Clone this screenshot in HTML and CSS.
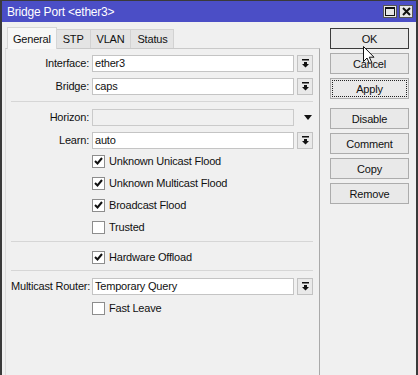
FILE: index.html
```html
<!DOCTYPE html>
<html lang="en">
<head>
  <meta charset="UTF-8" />
  <title>Bridge Port &lt;ether3&gt;</title>
  <link rel="stylesheet" href="styles.css">
</head>
<body>

  <div class="window">
    <!-- Title bar -->
    <div class="titlebar">
      <span class="title">Bridge Port &lt;ether3&gt;</span>
      <div class="title-btns">
        <span class="tbtn">
          <svg width="10" height="9" viewBox="0 0 10 9"><rect x="0.5" y="0.5" width="9" height="8" fill="none" stroke="#111"/><rect x="0" y="0" width="10" height="2" fill="#111"/></svg>
        </span>
        <span class="tbtn">
          <svg width="9" height="9" viewBox="0 0 9 9"><path d="M1 1L8 8M8 1L1 8" stroke="#111" stroke-width="2"/></svg>
        </span>
      </div>
    </div>

    <div class="content">
      <div class="main">
        <!-- Tabs -->
        <div class="tabs">
          <div class="tab active">General</div>
          <div class="tab">STP</div>
          <div class="tab">VLAN</div>
          <div class="tab">Status</div>
        </div>

        <div class="panel">
          <div class="row">
            <span class="lbl">Interface:</span>
            <div class="field">ether3</div>
            <div class="dd-btn"><svg width="7" height="9" viewBox="0 0 7 9"><path d="M0 0h7v1.5H0z M2 3h3v2h2L3.5 8.5 0 5h2z" fill="#111"/></svg></div>
          </div>
          <div class="row">
            <span class="lbl">Bridge:</span>
            <div class="field">caps</div>
            <div class="dd-btn"><svg width="7" height="9" viewBox="0 0 7 9"><path d="M0 0h7v1.5H0z M2 3h3v2h2L3.5 8.5 0 5h2z" fill="#111"/></svg></div>
          </div>

          <div class="sep"></div>

          <div class="row">
            <span class="lbl">Horizon:</span>
            <div class="field disabled"></div>
            <div class="dd-arrow"><svg width="8" height="5" viewBox="0 0 8 5"><path d="M0 0h8L4 5z" fill="#111"/></svg></div>
          </div>
          <div class="row row-tight">
            <span class="lbl">Learn:</span>
            <div class="field">auto</div>
            <div class="dd-btn"><svg width="7" height="9" viewBox="0 0 7 9"><path d="M0 0h7v1.5H0z M2 3h3v2h2L3.5 8.5 0 5h2z" fill="#111"/></svg></div>
          </div>

          <div class="check-row">
            <span class="box"><svg width="9" height="8" viewBox="0 0 9 8"><path d="M1 4l2.5 2.5L8 1" fill="none" stroke="#111" stroke-width="2"/></svg></span>
            <span>Unknown Unicast Flood</span>
          </div>
          <div class="check-row">
            <span class="box"><svg width="9" height="8" viewBox="0 0 9 8"><path d="M1 4l2.5 2.5L8 1" fill="none" stroke="#111" stroke-width="2"/></svg></span>
            <span>Unknown Multicast Flood</span>
          </div>
          <div class="check-row">
            <span class="box"><svg width="9" height="8" viewBox="0 0 9 8"><path d="M1 4l2.5 2.5L8 1" fill="none" stroke="#111" stroke-width="2"/></svg></span>
            <span>Broadcast Flood</span>
          </div>
          <div class="check-row">
            <span class="box"></span>
            <span>Trusted</span>
          </div>

          <div class="sep sep-mid"></div>

          <div class="check-row">
            <span class="box"><svg width="9" height="8" viewBox="0 0 9 8"><path d="M1 4l2.5 2.5L8 1" fill="none" stroke="#111" stroke-width="2"/></svg></span>
            <span>Hardware Offload</span>
          </div>

          <div class="sep sep-low"></div>

          <div class="row row-last">
            <span class="lbl">Multicast Router:</span>
            <div class="field">Temporary Query</div>
            <div class="dd-btn"><svg width="7" height="9" viewBox="0 0 7 9"><path d="M0 0h7v1.5H0z M2 3h3v2h2L3.5 8.5 0 5h2z" fill="#111"/></svg></div>
          </div>
          <div class="check-row">
            <span class="box"></span>
            <span>Fast Leave</span>
          </div>
        </div>
      </div>

      <!-- Action buttons -->
      <div class="actions">
        <button class="btn default">OK</button>
        <button class="btn">Cancel</button>
        <button class="btn focus">Apply</button>
        <button class="btn spaced">Disable</button>
        <button class="btn">Comment</button>
        <button class="btn">Copy</button>
        <button class="btn">Remove</button>
      </div>
    </div>

    <!-- Mouse pointer over the OK button -->
    <svg class="cursor" width="12" height="19" viewBox="0 0 12 19">
      <path d="M0.5 0.5V15.5L4 12L6.5 17.5L8.8 16.5L6.3 11.2H11Z" fill="#fff" stroke="#111" stroke-width="1"/>
    </svg>
  </div>

</body>
</html>
```

FILE: styles.css
```css
* {
  box-sizing: border-box;
  margin: 0;
  padding: 0;
}

body {
  font-family: "Liberation Sans", Arial, sans-serif;
  font-size: 11px;
  letter-spacing: -0.2px;
  color: #111;
  background: #f0f0f0;
  overflow: hidden;
}

.window {
  position: relative;
  height: 375px;
  border: 2px solid #3a3a3a;
  border-top-width: 1px;
  border-bottom: none;
  background: #f0f0f0;
  overflow: hidden;
}

/* Title bar */
.titlebar {
  height: 21px;
  display: flex;
  justify-content: space-between;
  align-items: center;
  padding: 0 3px 0 5px;
  background: #4b4ec6;
  color: #fff;
  font-size: 12px;
}

.title-btns {
  display: flex;
  gap: 2px;
}

.tbtn {
  width: 14px;
  height: 13px;
  display: flex;
  justify-content: center;
  align-items: center;
  background: #e6e6e6;
  border: 1px solid #555;
}

/* Layout */
.content {
  display: flex;
  padding: 5px 0 0 3px;
}

.main {
  width: 315px;
  display: flex;
  flex-direction: column;
}

/* Tabs */
.tabs {
  display: flex;
  align-items: flex-end;
  height: 21px;
  padding-left: 2px;
}

.tab {
  height: 19px;
  padding: 0 6px;
  display: flex;
  align-items: center;
  background: #e4e4e4;
  border: 1px solid #d2d2d2;
  border-bottom: none;
  margin-left: -1px;
}

.tab.active {
  height: 22px;
  margin-bottom: -1px;
  padding: 0 5px;
  background: #f7f7f7;
  border-color: #d6d6d6;
  margin-left: 0;
  position: relative;
  z-index: 1;
}

/* Panel */
.panel {
  height: 330px;
  border-top: 1px solid #c9c9c9;
  border-right: 1px solid #a9a9a9;
  border-left: 1px solid #dcdcdc;
  padding: 6px 6px 0 5px;
}

.row {
  display: grid;
  grid-template-columns: 78px 1fr 16px;
  column-gap: 3px;
  height: 17px;
  margin-bottom: 6px;
}

.row-tight {
  margin-bottom: 1px;
}

.row-last {
  margin-bottom: 2px;
}

.lbl {
  text-align: right;
  line-height: 17px;
  white-space: nowrap;
}

.field {
  background: #fff;
  border: 1px solid #c4c4c4;
  padding-left: 2px;
  line-height: 15px;
}

.field.disabled {
  background: #f0f0f0;
  border-color: #cacaca;
}

.dd-btn {
  display: flex;
  justify-content: center;
  align-items: center;
  background: #e9e9e9;
  border: 1px solid #c2c2c2;
}

.dd-arrow {
  display: flex;
  justify-content: center;
  align-items: center;
  padding-left: 6px;
}

.check-row {
  display: flex;
  align-items: center;
  gap: 4px;
  height: 22px;
  padding-left: 81px;
}

.box {
  width: 13px;
  height: 13px;
  display: flex;
  justify-content: center;
  align-items: center;
  background: #fff;
  border: 1px solid #8d8d8d;
}

.sep {
  height: 1px;
  background: #d6d6d6;
  margin: 5px 0 7px;
}

.sep-mid {
  margin: 3px 0 4px;
}

.sep-low {
  margin: 2px 0 7px;
}

/* Buttons */
.actions {
  width: 79px;
  margin: 1px 0 0 10px;
  display: flex;
  flex-direction: column;
  gap: 4px;
}

.btn {
  height: 21px;
  font-family: inherit;
  font-size: 11px;
  letter-spacing: -0.2px;
  color: #111;
  background: #e9e9e9;
  border: 1px solid #acacac;
}

.btn.default {
  border-color: #3c3c3c;
}

.btn.focus {
  outline: 1px dotted #222;
  outline-offset: -3px;
}

.btn.spaced {
  margin-top: 5px;
}

.cursor {
  position: absolute;
  left: 361px;
  top: 45px;
}
```
